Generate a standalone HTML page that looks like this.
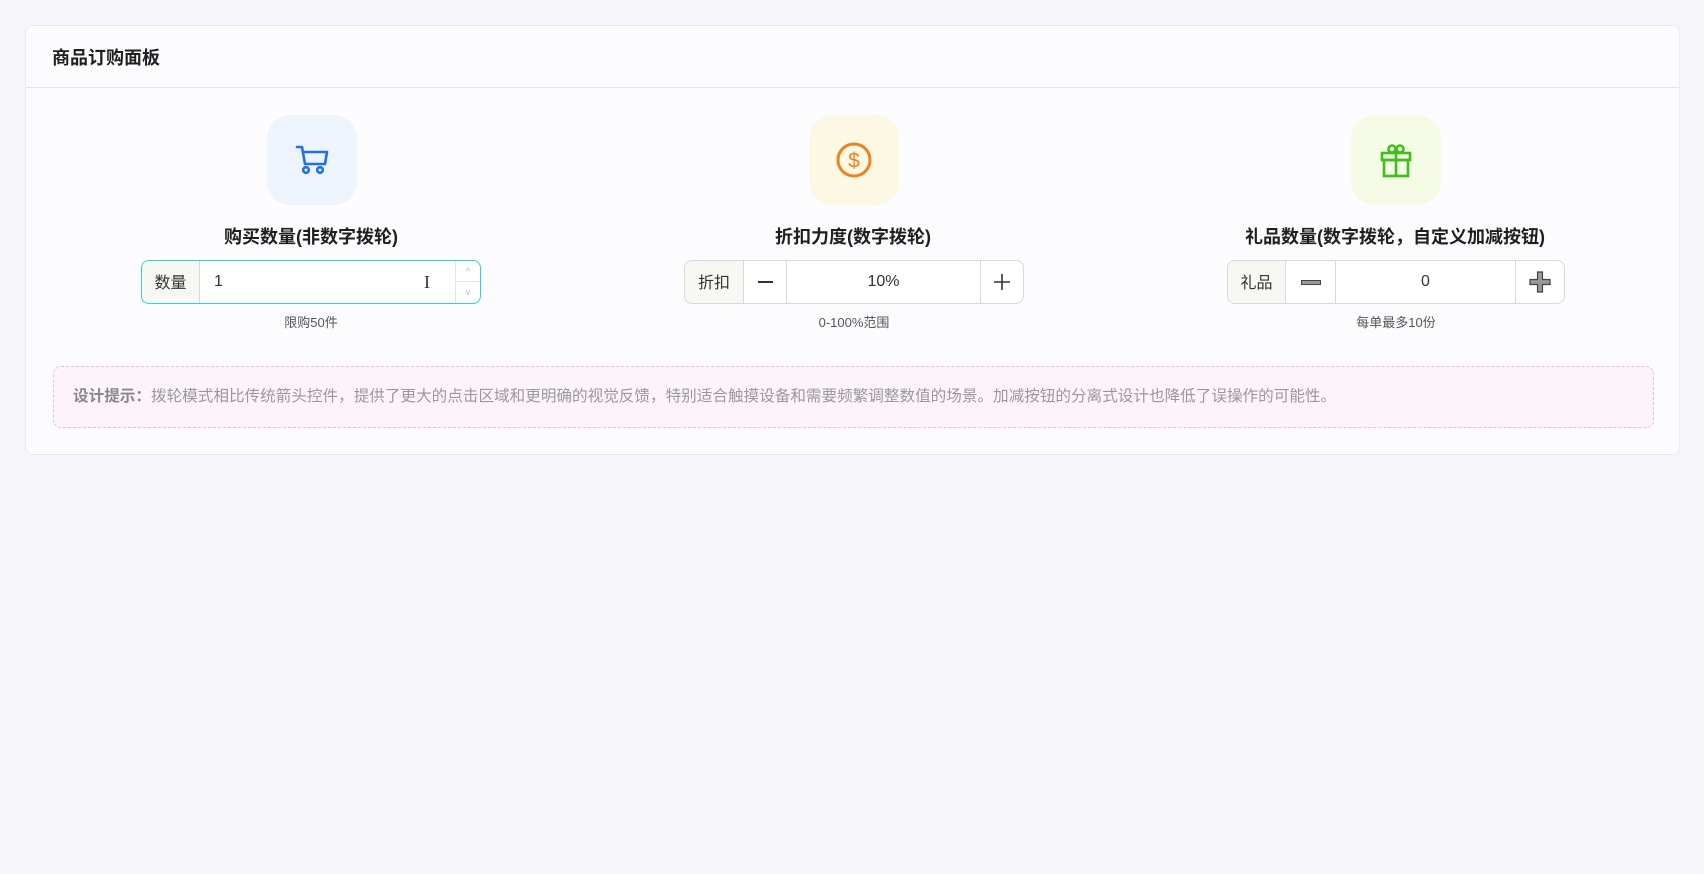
<!DOCTYPE html>
<html><head><meta charset="utf-8"><style>
*{box-sizing:border-box;margin:0;padding:0}
body{width:1704px;height:874px;background:#f6f6f8;font-family:"Liberation Sans","Noto Sans CJK SC",sans-serif;position:relative;overflow:hidden}
.card{position:absolute;left:25px;top:25px;width:1655px;height:430px;background:#fcfcff;border:1px solid #ebebf2;border-radius:8px}
.hd{position:absolute;left:26px;top:18px;font-size:18px;font-weight:bold;color:#1f1f1f}
.line{position:absolute;left:0;right:0;top:61px;border-top:1px solid #e4e4ee}
.ic{position:absolute;width:90px;height:90px;border-radius:24px;top:89px;display:flex;align-items:center;justify-content:center}
.lbl{position:absolute;top:197px;width:500px;text-align:center;font-size:18px;font-weight:bold;color:#1f1f1f}
.grp{position:absolute;top:234px;height:44px;border:1px solid #d9d9d9;border-radius:8px;display:flex;background:#fff;overflow:hidden}
.grp>div{height:100%;display:flex;align-items:center;justify-content:center;font-size:16px;color:#333}
.ad{background:#f7f7f4;border-right:1px solid #d9d9d9;padding-bottom:2px}
.bt{border-right:1px solid #d9d9d9}
.help{position:absolute;top:286px;width:400px;text-align:center;font-size:13px;color:#555}
.tip{position:absolute;left:27px;top:340px;width:1601px;height:62px;border:1px dashed #f5b8d8;border-radius:8px;background:#fdf4fb;font-size:15.6px;color:#999;padding:0 0 0 19px;line-height:60px}
</style></head><body>
<div class="card">
<div class="hd">商品订购面板</div>
<div class="line"></div>

<div class="ic" style="left:241px;background:#eef4fd">
<svg width="34" height="32" viewBox="0 0 34 32" fill="none" stroke="#1f6ff0" stroke-width="2.6" stroke-linejoin="round" stroke-linecap="round"><path d="M2 3h5l3 17h19"/><path d="M8 8h24l-2 12"/><circle cx="11" cy="26" r="2.8"/><circle cx="25" cy="26" r="2.8"/></svg>
</div>
<div class="ic" style="left:783px;background:#fdf8e4">
<svg width="40" height="40" viewBox="0 0 40 40"><circle cx="20" cy="20" r="16" fill="none" stroke="#f0821e" stroke-width="3"/><text x="20" y="27.5" text-anchor="middle" font-family="Liberation Sans" font-size="21" fill="#f0821e">$</text></svg>
</div>
<div class="ic" style="left:1325px;background:#f6fbe6">
<svg width="34" height="36" viewBox="0 0 34 36" fill="none" stroke="#3fbf1a" stroke-width="2.6"><rect x="3" y="11" width="28" height="7"/><rect x="5" y="18" width="24" height="16"/><path d="M17 11v23"/><circle cx="13" cy="7" r="3.5"/><circle cx="21" cy="7" r="3.5"/></svg>
</div>

<div class="lbl" style="left:35px">购买数量(非数字拨轮)</div>
<div class="lbl" style="left:577px">折扣力度(数字拨轮)</div>
<div class="lbl" style="left:1119px">礼品数量(数字拨轮，自定义加减按钮)</div>

<div class="grp" style="left:115px;width:340px;border-color:#2fd3d3">
<div class="ad" style="width:58px">数量</div>
<div style="flex:1;justify-content:flex-start;padding-left:14px">1<span style="margin-left:auto;margin-right:25px;font-size:18px;color:#333;font-family:'Liberation Serif'">I</span></div>
<div style="width:25px;flex-direction:column;border-left:1px solid #e2e2e2"><div style="height:50%;width:100%;border-bottom:1px solid #e2e2e2;font-size:9px;color:#bbb;text-align:center;line-height:20px">^</div><div style="height:50%;font-size:9px;color:#bbb;line-height:20px">v</div></div>
</div>
<div class="grp" style="left:658px;width:340px">
<div class="ad" style="width:59px">折扣</div>
<div class="bt" style="width:43px"><span style="display:block;width:15px;height:1.6px;background:#333"></span></div>
<div class="bt" style="width:194px">10%</div>
<div style="flex:1"><svg width="16" height="16" viewBox="0 0 16 16"><path d="M8 0v16M0 8h16" stroke="#333" stroke-width="1.6"/></svg></div>
</div>
<div class="grp" style="left:1201px;width:338px">
<div class="ad" style="width:58px">礼品</div>
<div class="bt" style="width:50px"><span style="display:block;width:20px;height:5px;background:#999;border:1px solid #444"></span></div>
<div class="bt" style="width:180px">0</div>
<div style="flex:1"><svg width="22" height="22" viewBox="0 0 22 22"><path d="M8.5 1h5v7.5H21v5h-7.5V21h-5v-7.5H1v-5h7.5z" fill="#999" stroke="#444" stroke-width="1.2"/></svg></div>
</div>

<div class="help" style="left:85px">限购50件</div>
<div class="help" style="left:628px">0-100%范围</div>
<div class="help" style="left:1170px">每单最多10份</div>

<div class="tip"><b style="color:#888">设计提示：</b>拨轮模式相比传统箭头控件，提供了更大的点击区域和更明确的视觉反馈，特别适合触摸设备和需要频繁调整数值的场景。加减按钮的分离式设计也降低了误操作的可能性。</div>
</div>
</body></html>
